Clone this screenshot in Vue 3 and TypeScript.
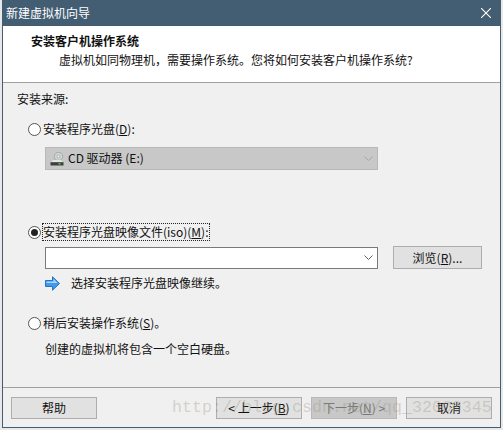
<script setup lang="ts">
const watermark = 'http://blog.csdn.net/qq_32000345'
</script>

<template>
  <div class="page">
    <div class="window">
      <div class="titlebar">
        <span class="title">新建虚拟机向导</span>
        <svg class="close" width="10" height="10" viewBox="0 0 10 10">
          <path d="M0 0 10 10M10 0 0 10" stroke="#fff" stroke-width="1.1" fill="none" />
        </svg>
      </div>
      <div class="header">
        <div class="h-title">安装客户机操作系统</div>
        <div class="h-sub">虚拟机如同物理机，需要操作系统。您将如何安装客户机操作系统?</div>
      </div>
      <div class="body">
        <div class="source">安装来源:</div>

        <div class="radio-row r1">
          <span class="radio"></span>
          <span class="label">安装程序光盘(<u>D</u>):</span>
        </div>
        <div class="combo disabled">
          <svg class="disk" width="14" height="14" viewBox="0 0 14 14">
            <circle cx="8.5" cy="4.5" r="4.2" fill="#cfd4d4" stroke="#9aa0a0" stroke-width="0.8" />
            <circle cx="8.5" cy="4.5" r="1.4" fill="#f4f4f4" stroke="#8a9090" stroke-width="0.6" />
            <path d="M2.5 8h9l2 2.2H0.5z" fill="#f2f2f2" stroke="#b0b0b0" stroke-width="0.5" />
            <rect x="0.5" y="10.2" width="13" height="3.3" fill="#3c4040" />
            <rect x="8.5" y="11" width="2" height="1.5" fill="#3fd24a" />
          </svg>
          <span class="combo-text">CD 驱动器 (E:)</span>
          <svg class="chev" width="9" height="5" viewBox="0 0 9 5">
            <path d="M0.5 0.5 4.5 4.5 8.5 0.5" stroke="#a8a8a8" fill="none" />
          </svg>
        </div>

        <div class="radio-row r2">
          <span class="radio checked"><i></i></span>
          <span class="label focus">安装程序光盘映像文件(iso)(<u>M</u>):</span>
        </div>
        <div class="file-row">
          <div class="combo edit">
            <svg class="chev" width="9" height="5" viewBox="0 0 9 5">
              <path d="M0.5 0.5 4.5 4.5 8.5 0.5" stroke="#606060" fill="none" />
            </svg>
          </div>
          <div class="btn browse">浏览(<u>R</u>)...</div>
        </div>
        <div class="hint">
          <svg width="15" height="15" viewBox="0 0 15 15">
            <path d="M0.5 4.5H7.5V0.8L14.5 7.5 7.5 14.2V10.5H0.5z" fill="#3f9bf0" stroke="#2a6fc0" stroke-width="1" />
            <path d="M1.5 5.5H8.5V3L12.5 7H1.5z" fill="#a5d6fb" />
          </svg>
          <span>选择安装程序光盘映像继续。</span>
        </div>

        <div class="radio-row r3">
          <span class="radio"></span>
          <span class="label">稍后安装操作系统(<u>S</u>)。</span>
        </div>
        <div class="note">创建的虚拟机将包含一个空白硬盘。</div>
      </div>
      <div class="footer">
        <div class="btn help">帮助</div>
        <div class="nav">
          <div class="btn">&lt; 上一步(<u>B</u>)</div>
          <div class="btn off">下一步(<u>N</u>) &gt;</div>
          <div class="btn">取消</div>
        </div>
      </div>
    </div>
    <div class="watermark">{{ watermark }}</div>
  </div>
</template>

<style>
html, body { margin: 0; background: #fff; }
</style>

<style scoped>
.page {
  position: relative;
  width: 503px;
  height: 430px;
  overflow: hidden;
  background: #e8e8e8;
  font: 12px/16px "Noto Sans CJK SC", "Liberation Sans", sans-serif;
  color: #111;
}
.window {
  box-sizing: border-box;
  margin-left: 2px;
  width: 499px;
  height: 428px;
  border: 1px solid #435d73;
  border-width: 0 1px 1px 1px;
  background: #f0f0f0;
  display: flex;
  flex-direction: column;
}
.titlebar {
  height: 26px;
  flex: none;
  background: #435d73;
  color: #fff;
  display: flex;
  align-items: center;
  justify-content: space-between;
  padding: 0 9px 0 3px;
}
.header {
  height: 57px;
  flex: none;
  box-sizing: border-box;
  background: #fff;
  border-bottom: 1px solid #a0a0a0;
  padding-top: 7px;
}
.h-title { margin-left: 28px; font-weight: 700; line-height: 16px; }
.h-sub { margin-left: 56px; margin-top: 3px; line-height: 16px; }
.body {
  flex: 1;
  padding: 8px 0 0 14px;
}
.source { line-height: 16px; }
.radio-row { display: flex; align-items: center; margin-left: 11px; height: 16px; gap: 2px; }
.r1 { margin-top: 14px; }
.r2 { margin-top: 54px; }
.r3 { margin-top: 24px; }
.radio {
  box-sizing: border-box;
  width: 13px;
  height: 13px;
  border: 1px solid #555;
  border-radius: 50%;
  background: #fff;
  display: flex;
  align-items: center;
  justify-content: center;
}
.radio i { width: 7px; height: 7px; border-radius: 50%; background: #222; }
.label { white-space: nowrap; }
.focus { outline: 1px dotted #222; outline-offset: 0; }
.combo {
  box-sizing: border-box;
  width: 333px;
  margin-left: 28px;
  display: flex;
  align-items: center;
  position: relative;
}
.disabled {
  margin-top: 10px;
  height: 23px;
  background: #c8c8c8;
  border: 1px solid #b8b8b8;
  padding-left: 4px;
  gap: 4px;
}
.combo-text { white-space: nowrap; margin-top: -2px; }
.chev { margin-left: auto; margin-right: 4px; }
.edit {
  height: 22px;
  background: #fff;
  border: 1px solid #7a7a7a;
}
.file-row { display: flex; align-items: center; margin-top: 6px; gap: 15px; }
.btn {
  box-sizing: border-box;
  width: 86px;
  height: 22px;
  background: #e1e1e1;
  border: 1px solid #adadad;
  display: flex;
  align-items: center;
  justify-content: center;
  white-space: nowrap;
}
.browse { width: 89px; height: 23px; }
.off { background: #c8c8c8; border-color: #b8b8b8; color: #777; }
.hint { display: flex; align-items: center; height: 16px; margin: 6px 0 0 28px; gap: 11px; }
.note { margin: 10px 0 0 28px; }
.footer {
  height: 40px;
  flex: none;
  box-sizing: border-box;
  border-top: 1px solid #a0a0a0;
  padding: 9px 8px 0 8px;
  display: flex;
  justify-content: space-between;
}
.nav { display: flex; gap: 9px; }
.watermark {
  position: absolute;
  left: 172px;
  top: 398px;
  font: 16.67px/20px "Liberation Mono", monospace;
  color: rgba(150, 140, 120, 0.32);
  white-space: nowrap;
  pointer-events: none;
}
</style>
